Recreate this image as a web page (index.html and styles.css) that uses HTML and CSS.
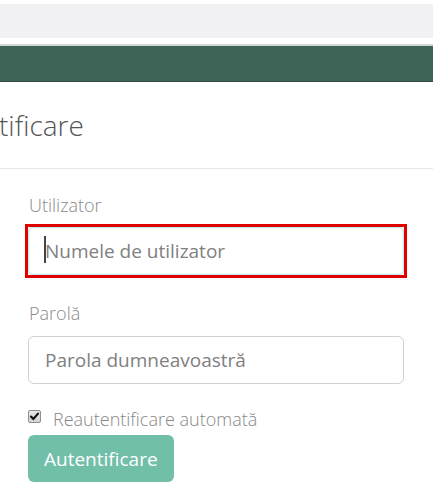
FILE: index.html
```html
<!DOCTYPE html>
<html lang="ro">
<head>
<meta charset="utf-8">
<title>Autentificare</title>
<link rel="stylesheet" href="styles.css">
</head>
<body>
<div class="topbar"></div>
<div class="navline"></div>
<div class="navbar"></div>
<div class="header">
  <h1 class="title">tificare</h1>
</div>
<form class="form">
  <label class="label" for="user">Utilizator</label>
  <div class="field focused">
    <input id="user" class="input input-focus" type="text" placeholder="Numele de utilizator">
    <span class="caret"></span>
  </div>
  <label class="label label-pass" for="pass">Parolă</label>
  <div class="field">
    <input id="pass" class="input" type="password" placeholder="Parola dumneavoastră">
  </div>
  <div class="check-row">
    <span class="checkbox"><svg width="11" height="11" viewBox="0 0 11 11"><path d="M2 5.6 L4.3 8 L9 2.6" fill="none" stroke="#111" stroke-width="2.2" stroke-linecap="round" stroke-linejoin="round"/></svg></span>
    <span class="check-text">Reautentificare automată</span>
  </div>
  <button class="btn" type="button">Autentificare</button>
</form>
</body>
</html>
```
FILE: styles.css
```css
html, body {
  margin: 0;
  padding: 0;
  background: #fff;
  overflow: hidden;
}
body {
  font-family: "Open Sans", "Liberation Sans", sans-serif;
  color: #555;
}
.topbar {
  margin-top: 4px;
  height: 34px;
  background: #f1f1f3;
}
.navline {
  margin-top: 6px;
  height: 2px;
  background: #cfd8d5;
}
.navbar {
  height: 35px;
  background: #3e6458;
  border-bottom: 1px solid #2c4a40;
}
.header {
  padding: 23px 0 23px 0;
  border-bottom: 1px solid #e6e6e6;
}
.title {
  margin: 0 0 0 -1px;
  font-size: 28px;
  line-height: 40px;
  font-weight: 300;
  color: #555;
  white-space: nowrap;
}
.form {
  display: flex;
  flex-direction: column;
  align-items: flex-start;
  padding: 25px 29px 0 28px;
}
.label {
  font-size: 18px;
  line-height: 22px;
  font-weight: 300;
  color: #8a8a8a;
  margin-left: 1px;
}
.label-pass {
  margin-top: 27px;
}
.field {
  position: relative;
  margin-top: 11px;
  width: 376px;
}
.label-pass + .field {
  margin-top: 12px;
}
.focused {
  outline: 3px solid #e00000;
  outline-offset: 0;
}
.input {
  box-sizing: border-box;
  width: 100%;
  height: 48px;
  padding: 0 16px;
  border: 1px solid #d2d2d2;
  border-radius: 6px;
  font-family: "Open Sans", "Liberation Sans", sans-serif;
  font-size: 19px;
  color: #555;
  background: #fff;
  display: block;
}
.input::placeholder {
  color: #808080;
}
.input-focus {
  border-color: #bfe8e6;
  border-radius: 4px;
  box-shadow: inset 0 0 2px rgba(120, 200, 200, 0.35);
  outline: none;
}
.caret {
  position: absolute;
  left: 16px;
  top: 9px;
  width: 2px;
  height: 27px;
  background: #444;
}
.check-row {
  display: flex;
  align-items: center;
  margin-top: 23px;
  height: 24px;
}
.checkbox {
  box-sizing: border-box;
  width: 13px;
  height: 13px;
  border: 1px solid #8f8f8f;
  border-radius: 2px;
  background: linear-gradient(#e6e6e6, #d4d4d4);
  display: flex;
  align-items: center;
  justify-content: center;
  margin-top: -6px;
}
.check-text {
  margin-left: 12px;
  font-size: 18px;
  line-height: 24px;
  font-weight: 300;
  color: #888;
}
.btn {
  margin-top: 4px;
  height: 47px;
  padding: 0 16px;
  border: none;
  border-radius: 6px;
  background: #72bfa9;
  color: #fff;
  font-family: "Open Sans", "Liberation Sans", sans-serif;
  font-size: 19px;
  font-weight: 400;
}
```
